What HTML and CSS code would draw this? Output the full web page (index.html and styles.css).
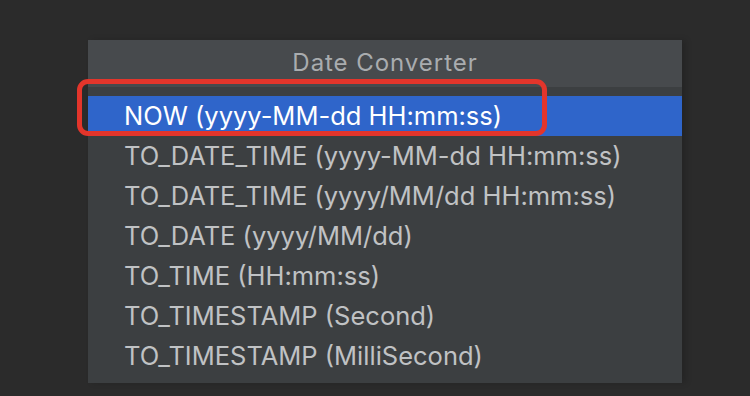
FILE: index.html
```html
<!DOCTYPE html>
<html lang="en">
<head>
    <meta charset="UTF-8">
    <meta name="viewport" content="width=device-width, initial-scale=1.0">
    <title>Date Converter</title>
    <link rel="stylesheet" href="styles.css">
</head>
<body>
    <div class="popup">
        <div class="popup-title">Date Converter</div>
        <ul class="popup-list">
            <li class="item selected">NOW (yyyy-MM-dd HH:mm:ss)</li>
            <li class="item">TO_DATE_TIME (yyyy-MM-dd HH:mm:ss)</li>
            <li class="item">TO_DATE_TIME (yyyy/MM/dd HH:mm:ss)</li>
            <li class="item">TO_DATE (yyyy/MM/dd)</li>
            <li class="item">TO_TIME (HH:mm:ss)</li>
            <li class="item">TO_TIMESTAMP (Second)</li>
            <li class="item">TO_TIMESTAMP (MilliSecond)</li>
        </ul>
        <div class="highlight"></div>
    </div>
</body>
</html>
```

FILE: styles.css
```css
body {
    margin: 0;
    padding: 40px 0 0 88px;
    height: 396px;
    box-sizing: border-box;
    background-color: #2b2b2b;
    font-family: 'Inter', 'Liberation Sans', sans-serif;
    overflow: hidden;
}

.popup {
    position: relative;
    width: 594px;
    height: 343px;
    background-color: #3c3f41;
    box-shadow: 4px 0 6px rgba(0, 0, 0, 0.15);
}

.popup-title {
    height: 47px;
    background-color: #474a4d;
    color: #a9acaf;
    font-size: 24px;
    line-height: 45px;
    text-align: center;
    letter-spacing: 0.95px;
}

.popup-list {
    list-style: none;
    margin: 9px 0 0 0;
    padding: 0;
}

.item {
    height: 40px;
    line-height: 39px;
    padding-left: 36px;
    font-size: 25.5px;
    color: #c0c2c4;
    white-space: nowrap;
}

.item.selected {
    background-color: #2f65ca;
    color: #ffffff;
}

.highlight {
    position: absolute;
    left: -11px;
    top: 39px;
    width: 460px;
    height: 47px;
    border: 5px solid #e3352b;
    border-radius: 11px;
}
```
